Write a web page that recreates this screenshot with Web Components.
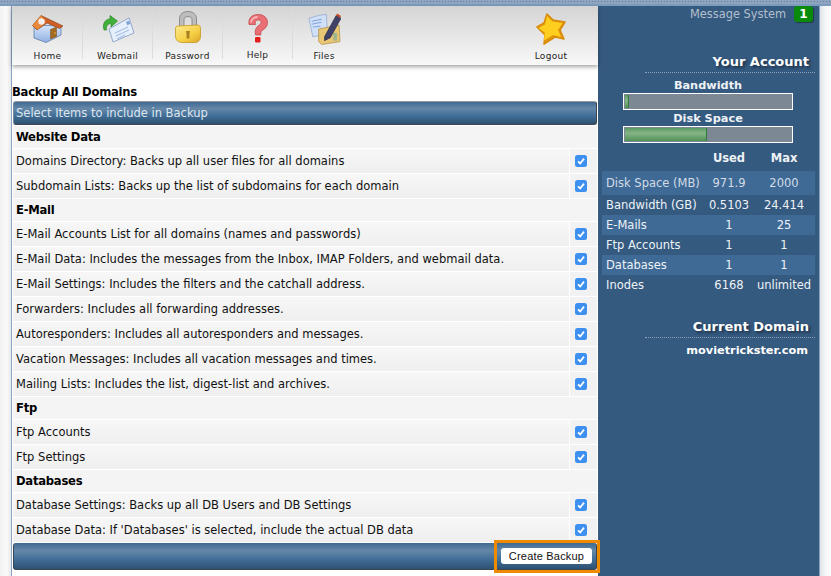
<!DOCTYPE html>
<html>
<head>
<meta charset="utf-8">
<title>Backup All Domains</title>
<style>
  html, body { margin: 0; padding: 0; height: 576px; overflow: hidden; background: #fff; }
  body { font-family: "DejaVu Sans", Verdana, sans-serif; }
</style>
</head>
<body>
<da-page>
  <da-nav slot="nav">
    <da-nav-item label="Home"><svg viewBox="0 0 32 28" width="32" height="28"><defs><linearGradient id="wall" x1="0" y1="0" x2="0" y2="1"><stop offset="0" stop-color="#d8e6fb"/><stop offset="1" stop-color="#8fb0e2"/></linearGradient></defs><path d="M2 10v13l12 4.500L29 20v-9z" fill="url(#wall)" stroke="#5e7cab" stroke-width=".8"/><path d="M18.500 24V14.500l6-2.500v9.500z" fill="#a56a22" stroke="#6f4a1a" stroke-width=".5"/><circle cx="23" cy="18" r=".7" fill="#f2cf60"/><path d="M.5 10.500L9 .5l22 10.500-3.500 2.500L15 8 5 15z" fill="#cf5d26" stroke="#8f4a1c" stroke-width=".7"/><path d="M9 .5l5 6.500L5.500 14.500.5 10.500z" fill="#e98a3a"/><circle cx="9.500" cy="6.500" r="3.200" fill="#f4efec"/></svg></da-nav-item>
    <da-nav-item label="Webmail"><svg viewBox="0 0 34 28" width="34" height="28"><path d="M8 14L28 3l5 15-21 9z" fill="#e6effc" stroke="#7d98c4" stroke-width=".8"/><path d="M14 18l13-6M15 21l13-6M16 24l8-4" stroke="#a7c0e6" stroke-width="1.100"/><path d="M25 7l3-1.500 1.200 3.500-3 1.300z" fill="#7ea4dc"/><path d="M3 15C1 9 4 4 9 4V.5L16.500 6 10 12V8.500C7 8.500 5 11 5.500 15z" fill="#3fb03a" stroke="#23801f" stroke-width=".6"/></svg></da-nav-item>
    <da-nav-item label="Password" class="lock"><svg viewBox="0 0 26 32" width="26" height="32"><defs><linearGradient id="brass" x1="0" y1="0" x2="1" y2="1"><stop offset="0" stop-color="#fdeb93"/><stop offset=".6" stop-color="#f6cf45"/><stop offset="1" stop-color="#d9a326"/></linearGradient></defs><path d="M4.500 16V8c0-5 4-7.500 8.500-7.500S21.500 3 21.500 8v8h-4.500V8.500c0-2-2-3-4-3s-4 1-4 3V16z" fill="#bdbdbd" stroke="#7b7b7b" stroke-width=".8"/><path d="M3 15l20-1c2 0 2.500 2 2.500 4v7c0 4-2 6.500-6 6.500H8C3 31.500.5 29 .5 25v-7c0-2 .7-3 2.500-3z" fill="url(#brass)" stroke="#c39a22" stroke-width=".8"/><path d="M11 20h4l-.6 3.500v4h-2.800v-4z" fill="#a97f22"/></svg></da-nav-item>
    <da-nav-item label="Help" class="help"><svg viewBox="0 0 20 29" width="20" height="29"><path d="M1 10.500C0 4 4 .5 10 .5c6 0 9.500 3.500 9.500 8 0 4.500-3 6.500-5.500 8-1 1-1.200 2-1.200 4.500H7.500c-1-4 0-7 2.500-9 2-1.500 3.500-2.500 3-4.500-.7-2-4.500-2-5.500 0-.6 1-.2 2 .2 3z" fill="#e96f74" stroke="#bd4347" stroke-width=".7"/><path d="M3 8.500c0-3 3-5.500 6.500-5.500" stroke="#f7baba" stroke-width="1.800" fill="none"/><rect x="7" y="23" width="5.500" height="5.500" rx="1.300" fill="#e61c1c"/></svg></da-nav-item>
    <da-nav-item label="Files" class="plain files"><svg viewBox="0 0 34 34" width="33" height="34"><path d="M1 6l10-3 8-1 1 20-15 3z" fill="#cfe0f8" stroke="#8aa2cc" stroke-width=".7"/><path d="M4 9l10-2M4 12l10-2M5 15l8-1" stroke="#7ea0d8"/><path d="M11 17l21-4 1 17-19 3-3-3z" fill="#e9c774" stroke="#a98a3e" stroke-width=".7"/><path d="M26 21h4v8h-4z" fill="#9fb58e"/><path d="M17 25L29 3l5 3-11 20-6 3z" fill="#3f4266" stroke="#23243c" stroke-width=".6"/><path d="M29 3l1-2 4 2.500-1 2z" fill="#c8451e"/></svg></da-nav-item>
    <da-spacer></da-spacer>
    <da-nav-item label="Logout" class="plain logout"><svg viewBox="0 0 30 32" width="30" height="32"><path d="M11 1l6 6 12 2-5 8 4 9-9-2-11 7 1-9-8-8 7-4z" fill="#e2960c" stroke="#d98c0a" stroke-width="1.600" stroke-linejoin="round"/><path d="M11 3l5.500 5.500 10 1.500-4.500 7 3 7-8-2-9 5.500.8-8L2.500 15l6.500-3.500z" fill="#ffcf1f"/></svg></da-nav-item>
  </da-nav>

  <da-form-head slot="main" title="Backup All Domains" sub="Select Items to include in Backup"></da-form-head>

  <da-group slot="main">Website Data</da-group>
  <da-option slot="main">Domains Directory: Backs up all user files for all domains</da-option>
  <da-option slot="main">Subdomain Lists: Backs up the list of subdomains for each domain</da-option>
  <da-group slot="main">E-Mail</da-group>
  <da-option slot="main">E-Mail Accounts List for all domains (names and passwords)</da-option>
  <da-option slot="main">E-Mail Data: Includes the messages from the Inbox, IMAP Folders, and webmail data.</da-option>
  <da-option slot="main">E-Mail Settings: Includes the filters and the catchall address.</da-option>
  <da-option slot="main">Forwarders: Includes all forwarding addresses.</da-option>
  <da-option slot="main">Autoresponders: Includes all autoresponders and messages.</da-option>
  <da-option slot="main">Vacation Messages: Includes all vacation messages and times.</da-option>
  <da-option slot="main">Mailing Lists: Includes the list, digest-list and archives.</da-option>
  <da-group slot="main">Ftp</da-group>
  <da-option slot="main">Ftp Accounts</da-option>
  <da-option slot="main">Ftp Settings</da-option>
  <da-group slot="main">Databases</da-group>
  <da-option slot="main">Database Settings: Backs up all DB Users and DB Settings</da-option>
  <da-option slot="main">Database Data: If 'Databases' is selected, include the actual DB data</da-option>
  <da-submit-bar slot="main">Create Backup</da-submit-bar>

  <da-sidebar slot="side">
    <da-message-link count="1">Message System</da-message-link>
    <da-side-title>Your Account</da-side-title>
    <da-meter label="Bandwidth" percent="2" class="first"></da-meter>
    <da-meter label="Disk Space" percent="49"></da-meter>
    <da-stats>
      <da-stat-row head value="Used" max="Max"></da-stat-row>
      <da-stat-row shade dim label="Disk Space (MB)" value="971.9" max="2000" tall></da-stat-row>
      <da-stat-row label="Bandwidth (GB)" value="0.5103" max="24.414"></da-stat-row>
      <da-stat-row shade label="E-Mails" value="1" max="25"></da-stat-row>
      <da-stat-row label="Ftp Accounts" value="1" max="1"></da-stat-row>
      <da-stat-row shade label="Databases" value="1" max="1"></da-stat-row>
      <da-stat-row label="Inodes" value="6168" max="unlimited"></da-stat-row>
    </da-stats>
    <da-side-title class="domain">Current Domain</da-side-title>
    <da-domain>movietrickster.com</da-domain>
  </da-sidebar>
</da-page>

<script>
// small helper, every element below is just a shadow root with its own style
class Base extends HTMLElement {
  constructor() {
    super();
    this.attachShadow({ mode: 'open' });
  }
  connectedCallback() {
    this.render();
  }
  attr(name, fallback) {
    return this.getAttribute(name) || fallback || '';
  }
}

class DaPage extends Base {
  render() {
    this.shadowRoot.innerHTML = `
      <style>
        :host { display: block; width: 831px; height: 576px; overflow: hidden;
          background: #fff; }
        .dots { height: 4px; background-color: #8fa5bf;
          background-image: radial-gradient(#5f7d9f 0.7px, transparent 0.8px);
          background-size: 3px 3px; }
        .band { height: 2px; background: #7c9cbe; }
        .frame { display: grid; grid-template-columns: 11px 1px 586px 221px 1px 11px; height: 570px; }
        .gutter { background: linear-gradient(to right, #f2f2f2, #fafafa 60%, #e8e8e8); }
        .rule { background: #8ba6c4; }
        .main { min-width: 0; display: flex; flex-direction: column; background: #fff; }
        .side { background: #355a80; }
        .rgutter { background: linear-gradient(to right, #dfe3e8, #f6f6f6 50%, #fff); }
      </style>
      <div class="dots"></div><div class="band"></div>
      <div class="frame">
        <div class="gutter"></div>
        <div class="rule"></div>
        <div class="main"><slot name="nav"></slot><slot name="main"></slot></div>
        <div class="side"><slot name="side"></slot></div>
        <div class="rule"></div>
        <div class="rgutter"></div>
      </div>`;
  }
}

class DaNav extends Base {
  render() {
    // z-index so the shadow paints over the form head below it
    this.shadowRoot.innerHTML = `
      <style>
        :host { display: flex; height: 59px; box-sizing: border-box; padding: 5px 0 0 1px;
          background: linear-gradient(#d4d4d4, #f8f8f8); position: relative; z-index: 1;
          box-shadow: 0 2px 4px rgba(0,0,0,.35); }
      </style>
      <slot></slot>`;
  }
}

class DaNavItem extends Base {
  render() {
    this.shadowRoot.innerHTML = `
      <style>
        :host { display: block; width: 70px; height: 48px; box-sizing: border-box;
          border-right: 1px solid #dcdcdc;
          font: 9px "DejaVu Sans", Verdana, sans-serif; letter-spacing: .3px; color: #222;
          text-align: center; }
        :host(.plain) { border-right: 0; }
        :host(.files) { width: 62px; }
        :host(.logout) { margin-right: 12px; }
        :host(.help) .label { margin-top: 4px; }
        :host(.lock) .icon { padding-bottom: 4px; box-sizing: border-box; }
        .icon { height: 35px; display: flex; align-items: center; justify-content: center; }
        .label { margin-top: 5px; }
        ::slotted(svg) { display: block; }
      </style>
      <div class="icon"><slot></slot></div>
      <div class="label">${this.attr('label')}</div>`;
  }
}

class DaSpacer extends Base {
  render() {
    this.shadowRoot.innerHTML = `<style>:host { display: block; flex: 1; }</style>`;
  }
}

class DaFormHead extends Base {
  render() {
    this.shadowRoot.innerHTML = `
      <style>
        :host { display: block; background: #fff; padding-bottom: 1px; }
        h1 { margin: 0; padding-top: 19px; height: 17px; font: bold 11.6px/17px "DejaVu Sans", Verdana, sans-serif;
          letter-spacing: -.25px; color: #000; }
        .bar { margin: 0 1px; height: 24px; box-sizing: border-box; padding-left: 2px;
          border: 1px solid #3c4650; border-top-color: #999; border-left-color: #7a8a9a; border-radius: 3px;
          background: linear-gradient(#3f6a94, #6587a8 30%, #43709a 60%, #2e5172);
          font: 11.5px/22px "DejaVu Sans", Verdana, sans-serif; color: #dfe6ee; }
      </style>
      <h1>${this.attr('title')}</h1>
      <div class="bar">${this.attr('sub')}</div>`;
  }
}

class DaGroup extends Base {
  render() {
    this.shadowRoot.innerHTML = `
      <style>
        :host { display: block; height: 23px; box-sizing: border-box; margin: 0 1px; padding: 0 3px;
          background: #f4f4f4; border-bottom: 1px solid #fff;
          font: bold 11.6px/23px "DejaVu Sans", Verdana, sans-serif; letter-spacing: -.25px; color: #000; }
      </style>
      <slot></slot>`;
  }
}

class DaOption extends Base {
  render() {
    this.shadowRoot.innerHTML = `
      <style>
        :host { display: grid; grid-template-columns: 1fr 28px; height: 25px; box-sizing: border-box;
          margin: 0 1px; background: #f2f2f2; border-bottom: 1px solid #fff;
          font: 11.5px/24px "DejaVu Sans", Verdana, sans-serif; color: #111; }
        .text { padding-left: 3px; white-space: nowrap; background: linear-gradient(#f7f7f7, #efefef); }
        .check { border-left: 1px solid #fff; display: flex; align-items: center; padding-left: 5px; }
        .box { width: 12px; height: 12px; border-radius: 2.5px; background: #3d8ff0; display: block; }
      </style>
      <div class="text"><slot></slot></div>
      <div class="check"><svg class="box" viewBox="0 0 12 12"><path d="M3 6.3l2.2 2.2L9 3.6" fill="none" stroke="#fff" stroke-width="1.8"/></svg></div>`;
  }
}

class DaSubmitBar extends Base {
  render() {
    this.shadowRoot.innerHTML = `
      <style>
        :host { display: flex; justify-content: flex-end; align-items: center; position: relative;
          margin: 0 1px; height: 27px; box-sizing: border-box; padding-right: 4px;
          border: 1px solid #3c4650; border-top: 0; border-radius: 3px;
          background: linear-gradient(#3f6a94, #6587a8 30%, #43709a 60%, #2e5172); }
        button { width: 91px; height: 16px; padding: 0; border: 0; border-radius: 3px; background: #fff;
          font: 11px "Liberation Sans", Arial, sans-serif; letter-spacing: .2px; color: #111; }
        .mark { position: absolute; right: -4px; top: -3px; width: 100px; height: 27px;
          border: 3px solid #f08a00; pointer-events: none; }
      </style>
      <button><slot></slot></button>
      <div class="mark"></div>`;
  }
}

class DaSidebar extends Base {
  render() {
    this.shadowRoot.innerHTML = `
      <style>
        :host { display: block; height: 100%; box-sizing: border-box; padding: 0 4px 0 3px;
          font-family: "DejaVu Sans", Verdana, sans-serif; color: #fff; }
      </style>
      <slot></slot>`;
  }
}

class DaMessageLink extends Base {
  render() {
    this.shadowRoot.innerHTML = `
      <style>
        :host { display: flex; justify-content: flex-end; align-items: center; gap: 8px; height: 16px;
          padding-right: 2px; font-size: 11.4px; color: #b3bfcc; }
        .count { width: 19px; height: 16px; border-radius: 3px; background: #0a8a0a; color: #fff;
          box-shadow: 1px 1px 1px #24384e; font: bold 12px/16px "DejaVu Sans", sans-serif; text-align: center; }
      </style>
      <span><slot></slot></span><span class="count">${this.attr('count')}</span>`;
  }
}

class DaSideTitle extends Base {
  render() {
    const domain = this.classList.contains('domain');
    this.shadowRoot.innerHTML = `
      <style>
        :host { display: block; margin-top: ${domain ? '23px' : '31px'}; margin-left: 44px; height: 20px;
          box-sizing: border-box; padding-right: 6px; text-align: right;
          border-bottom: 1px dotted #8ca3bb;
          font: bold 13px/17px "DejaVu Sans", sans-serif; color: #fff;
          text-shadow: 2px 2px 3px #1c2f44; }
      </style>
      <slot></slot>`;
  }
}

class DaMeter extends Base {
  render() {
    this.shadowRoot.innerHTML = `
      <style>
        :host { display: block; width: 170px; margin: 0 0 0 22px; text-align: center; }
        :host(.first) { margin-top: 4px; }
        .name { font: bold 11.3px/17px "DejaVu Sans", sans-serif; color: #eef2f6; height: 16px; }
        .track { height: 17px; box-sizing: border-box; border: 1px solid #fff; background: #7c8894; padding: 1px; }
        .fill { height: 100%; width: ${this.attr('percent')}%; min-width: 3px; border-right: 1px solid #2f7a3c;
          background: linear-gradient(#5b9a62, #86b488 40%, #4f9256); }
      </style>
      <div class="name">${this.attr('label')}</div>
      <div class="track"><div class="fill"></div></div>`;
  }
}

class DaStats extends Base {
  render() {
    this.shadowRoot.innerHTML = `
      <style>:host { display: block; margin-top: 5px; }</style>
      <slot></slot>`;
  }
}

class DaStatRow extends Base {
  render() {
    const shade = this.hasAttribute('shade');
    const head = this.hasAttribute('head');
    const h = head ? 23 : this.hasAttribute('tall') ? 24 : 20;
    this.shadowRoot.innerHTML = `
      <style>
        :host { display: grid; grid-template-columns: 100px 54px 56px; height: ${h}px; align-items: center;
          box-sizing: border-box; padding-bottom: ${head ? 3 : 0}px;
          width: 213px; margin-left: 1px;
          background: ${shade ? '#3f6a96' : 'transparent'};
          font: ${head ? 'bold ' : ''}11.5px/20px "DejaVu Sans", sans-serif;
          color: ${this.hasAttribute('dim') ? '#d3dce6' : '#eef2f6'}; }
        .l { padding-left: 4px; white-space: nowrap; }
        .n { text-align: center; white-space: nowrap; }
      </style>
      <div class="l">${this.attr('label')}</div>
      <div class="n">${this.attr('value')}</div>
      <div class="n">${this.attr('max')}</div>`;
  }
}

class DaDomain extends Base {
  render() {
    this.shadowRoot.innerHTML = `
      <style>
        :host { display: block; margin-top: 4px; padding-right: 7px; text-align: right;
          font: bold 11.3px/17px "DejaVu Sans", sans-serif; color: #fff; }
      </style>
      <slot></slot>`;
  }
}

customElements.define('da-page', DaPage);
customElements.define('da-nav', DaNav);
customElements.define('da-nav-item', DaNavItem);
customElements.define('da-spacer', DaSpacer);
customElements.define('da-form-head', DaFormHead);
customElements.define('da-group', DaGroup);
customElements.define('da-option', DaOption);
customElements.define('da-submit-bar', DaSubmitBar);
customElements.define('da-sidebar', DaSidebar);
customElements.define('da-message-link', DaMessageLink);
customElements.define('da-side-title', DaSideTitle);
customElements.define('da-meter', DaMeter);
customElements.define('da-stats', DaStats);
customElements.define('da-stat-row', DaStatRow);
customElements.define('da-domain', DaDomain);
</script>
</body>
</html>
